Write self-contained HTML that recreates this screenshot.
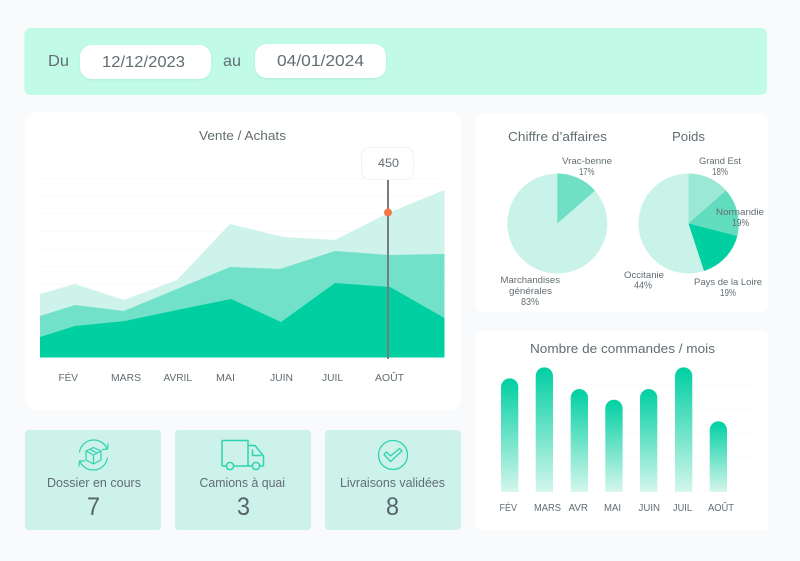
<!DOCTYPE html>
<html lang="fr">
<head>
<meta charset="utf-8">
<title>Tableau de bord</title>
<style>
html,body{margin:0;padding:0;background:#f8fafc;}
body{width:800px;height:561px;overflow:hidden;}
svg{display:block;filter:blur(.3px);}
text{font-family:"Liberation Sans",sans-serif;fill:#626d72;}
</style>
</head>
<body>
<svg width="800" height="561" viewBox="0 0 800 561" xmlns="http://www.w3.org/2000/svg">
<defs>
<linearGradient id="g" x1="0" y1="0" x2="0" y2="1">
<stop offset="0" stop-color="#00cfa2"/>
<stop offset="1" stop-color="#d3f6ec"/>
</linearGradient>
<filter id="s" x="-10%" y="-20%" width="120%" height="140%"><feDropShadow dx="0" dy="1" stdDeviation="1.2" flood-color="#7fbfa8" flood-opacity=".25"/></filter>
</defs>
<rect width="800" height="561" fill="#f8fafc"/>

<!-- header -->
<rect x="24.500" y="28" width="742.500" height="67" rx="6" fill="#c2fae8"/>
<rect x="80" y="45" width="131" height="34" rx="12" fill="#fff" filter="url(#s)"/>
<rect x="255" y="44" width="131" height="34" rx="12" fill="#fff" filter="url(#s)"/>
<text x="48" y="66" font-size="16" textLength="21" lengthAdjust="spacingAndGlyphs">Du</text>
<text x="102" y="67" font-size="16" textLength="83" lengthAdjust="spacingAndGlyphs">12/12/2023</text>
<text x="223" y="66" font-size="16" textLength="18" lengthAdjust="spacingAndGlyphs">au</text>
<text x="277" y="66" font-size="16" textLength="87" lengthAdjust="spacingAndGlyphs">04/01/2024</text>

<!-- main chart card -->
<rect x="25" y="112" width="436" height="298" rx="12" fill="#fff"/>
<text x="199" y="140" font-size="13" textLength="87" lengthAdjust="spacingAndGlyphs">Vente / Achats</text>
<g stroke="#f9fafa" stroke-width="1">
<path d="M40 178.500H445M40 196H445M40 213.500H445M40 231.500H445M40 249H445M40 266.500H445M40 284H445"/>
</g>
<path d="M40 294L75 284L124 300L177 280L230 224L283 237L335 240L388 213L444.500 190V357H40Z" fill="#cdf3ea"/>
<path d="M40 316L75 305L124 311L177 289L230 267L280 269L335 251L390 255L444.500 254V357H40Z" fill="#72e1c9"/>
<path d="M40 337L75 326L125 321L177 310L231 299L281 322L335 283L390 287L444.500 318V357.500H40Z" fill="#00cfa2"/>
<rect x="387" y="179" width="2" height="180" fill="#777d7e"/>
<circle cx="388" cy="212.500" r="4" fill="#f8784a"/>
<rect x="361.500" y="147.500" width="52" height="32" rx="8" fill="#fff" stroke="#f1f3f3"/>
<text x="378" y="167" font-size="12" textLength="21" lengthAdjust="spacingAndGlyphs">450</text>
<g font-size="10.500">
<text x="58.500" y="381" textLength="19.500" lengthAdjust="spacingAndGlyphs">FÉV</text>
<text x="111" y="381" textLength="30" lengthAdjust="spacingAndGlyphs">MARS</text>
<text x="163.500" y="381" textLength="28.500" lengthAdjust="spacingAndGlyphs">AVRIL</text>
<text x="216" y="381" textLength="19" lengthAdjust="spacingAndGlyphs">MAI</text>
<text x="270" y="381" textLength="23" lengthAdjust="spacingAndGlyphs">JUIN</text>
<text x="322" y="381" textLength="21" lengthAdjust="spacingAndGlyphs">JUIL</text>
<text x="375" y="381" textLength="29" lengthAdjust="spacingAndGlyphs">AOÛT</text>
</g>

<!-- stat cards -->
<rect x="25" y="430" width="136" height="100" rx="4" fill="#ccf2ea"/>
<rect x="175" y="430" width="136" height="100" rx="4" fill="#ccf2ea"/>
<rect x="325" y="430" width="136" height="100" rx="4" fill="#ccf2ea"/>

<!-- box icon -->
<g fill="none" stroke="#2fd3ae" stroke-width="1.200" stroke-linejoin="round" stroke-linecap="round">
<path d="M79.500 452A14.500 14.500 0 0 1 107 448.500"/>
<path d="M102.500 449.500L107.500 449L108 444"/>
<path d="M107.500 458A14.500 14.500 0 0 1 80 461.500"/>
<path d="M84.500 461L79.500 461L79 466"/>
<path d="M93.500 447.500L101 451V460L93.500 464L86 460V451Z"/>
<path d="M86 451L93.500 455L101 451M93.500 455V464M89.700 449.300L97.200 453"/>
</g>

<!-- truck icon -->
<g fill="none" stroke="#2fd3ae" stroke-width="1.500" stroke-linejoin="round">
<path d="M226.500 466H223A1 1 0 0 1 222 465V441.500A1 1 0 0 1 223 440.500H248V466H233.500"/>
<path d="M248 445.500H255L263.500 456V465A1 1 0 0 1 262.500 466H259.500M252.500 466H248"/>
<path d="M252.500 449.500V455.500H261.500"/>
<circle cx="230" cy="466" r="3.600"/>
<circle cx="256" cy="466" r="3.600"/>
</g>

<!-- check icon -->
<g fill="none" stroke="#2fd3ae" stroke-width="1.300" stroke-linejoin="round">
<circle cx="393" cy="455" r="14.500"/>
<path d="M384 454.500L386.500 452L390.500 456L399.500 448.500L402 451L390.500 461.500Z"/>
</g>

<text x="47" y="487" font-size="12.500" textLength="94" lengthAdjust="spacingAndGlyphs">Dossier en cours</text>
<text x="199.500" y="487" font-size="12.500" textLength="85.500" lengthAdjust="spacingAndGlyphs">Camions à quai</text>
<text x="340" y="487" font-size="12.500" textLength="105" lengthAdjust="spacingAndGlyphs">Livraisons validées</text>
<g font-size="25">
<text x="87" y="515" style="fill:#56646a" textLength="13" lengthAdjust="spacingAndGlyphs">7</text>
<text x="237" y="515" style="fill:#56646a" textLength="13" lengthAdjust="spacingAndGlyphs">3</text>
<text x="386" y="515" style="fill:#56646a" textLength="13" lengthAdjust="spacingAndGlyphs">8</text>
</g>

<!-- pies card -->
<rect x="476" y="113" width="292" height="199" rx="6" fill="#fff"/>
<text x="508" y="141" font-size="13" textLength="99" lengthAdjust="spacingAndGlyphs">Chiffre d’affaires</text>
<text x="672" y="141" font-size="13" textLength="33" lengthAdjust="spacingAndGlyphs">Poids</text>
<circle cx="557.300" cy="223.500" r="50" fill="#c9f3e8"/>
<path d="M557.300 223.500V173.500A50 50 0 0 1 595 190.800Z" fill="#6fe0c6"/>
<circle cx="688.500" cy="223.500" r="50" fill="#c9f3e8"/>
<path d="M688.500 223.500V173.500A50 50 0 0 1 726 190.500Z" fill="#9be8d5"/>
<path d="M688.500 223.500L726 190.500A50 50 0 0 1 737.300 236Z" fill="#62dcbf"/>
<path d="M688.500 223.500L737.300 236A50 50 0 0 1 704 271Z" fill="#00cfa2"/>
<g font-size="9.500">
<text x="562" y="164" textLength="50" lengthAdjust="spacingAndGlyphs">Vrac-benne</text>
<text x="579" y="175" font-size="10.500" textLength="15.500" lengthAdjust="spacingAndGlyphs">17%</text>
<text x="500.500" y="283" textLength="59.500" lengthAdjust="spacingAndGlyphs">Marchandises</text>
<text x="509" y="294" textLength="43" lengthAdjust="spacingAndGlyphs">générales</text>
<text x="521" y="305" font-size="10.500" textLength="18" lengthAdjust="spacingAndGlyphs">83%</text>
<text x="699" y="164" textLength="42" lengthAdjust="spacingAndGlyphs">Grand Est</text>
<text x="712" y="175" font-size="10.500" textLength="16" lengthAdjust="spacingAndGlyphs">18%</text>
<text x="716" y="215" textLength="48" lengthAdjust="spacingAndGlyphs">Normandie</text>
<text x="732" y="226" font-size="10.500" textLength="17" lengthAdjust="spacingAndGlyphs">19%</text>
<text x="624" y="278" textLength="40" lengthAdjust="spacingAndGlyphs">Occitanie</text>
<text x="634" y="288.500" font-size="10.500" textLength="18" lengthAdjust="spacingAndGlyphs">44%</text>
<text x="694" y="285" textLength="68" lengthAdjust="spacingAndGlyphs">Pays de la Loire</text>
<text x="720" y="296" font-size="10.500" textLength="16" lengthAdjust="spacingAndGlyphs">19%</text>
</g>

<!-- bars card -->
<rect x="476" y="331" width="292" height="199" rx="6" fill="#fff"/>
<text x="530" y="353" font-size="13" textLength="185" lengthAdjust="spacingAndGlyphs">Nombre de commandes / mois</text>
<g stroke="#fafbfb" stroke-width="1">
<path d="M490 384.500H755M490 396.500H755M490 408.500H755M490 420.500H755M490 432.500H755M490 444.500H755M490 456.500H755M490 468.500H755M490 491.500H755"/>
</g>
<path d="M501 491.700V387A8.650 8.650 0 0 1 518.300 387V491.700Z" fill="url(#g)"/>
<path d="M535.700 491.700V376A8.650 8.650 0 0 1 553 376V491.700Z" fill="url(#g)"/>
<path d="M570.700 491.700V397.700A8.650 8.650 0 0 1 588 397.700V491.700Z" fill="url(#g)"/>
<path d="M605.300 491.700V408.400A8.650 8.650 0 0 1 622.600 408.400V491.700Z" fill="url(#g)"/>
<path d="M640 491.700V397.700A8.650 8.650 0 0 1 657.300 397.700V491.700Z" fill="url(#g)"/>
<path d="M675 491.700V376A8.650 8.650 0 0 1 692.300 376V491.700Z" fill="url(#g)"/>
<path d="M709.700 491.700V430A8.650 8.650 0 0 1 727 430V491.700Z" fill="url(#g)"/>
<g font-size="10">
<text x="499.500" y="511" textLength="17.500" lengthAdjust="spacingAndGlyphs">FÉV</text>
<text x="534" y="511" textLength="27" lengthAdjust="spacingAndGlyphs">MARS</text>
<text x="568.500" y="511" textLength="19.500" lengthAdjust="spacingAndGlyphs">AVR</text>
<text x="604" y="511" textLength="17" lengthAdjust="spacingAndGlyphs">MAI</text>
<text x="638.500" y="511" textLength="21.500" lengthAdjust="spacingAndGlyphs">JUIN</text>
<text x="673" y="511" textLength="19" lengthAdjust="spacingAndGlyphs">JUIL</text>
<text x="708" y="511" textLength="26" lengthAdjust="spacingAndGlyphs">AOÛT</text>
</g>
</svg>
</body>
</html>
